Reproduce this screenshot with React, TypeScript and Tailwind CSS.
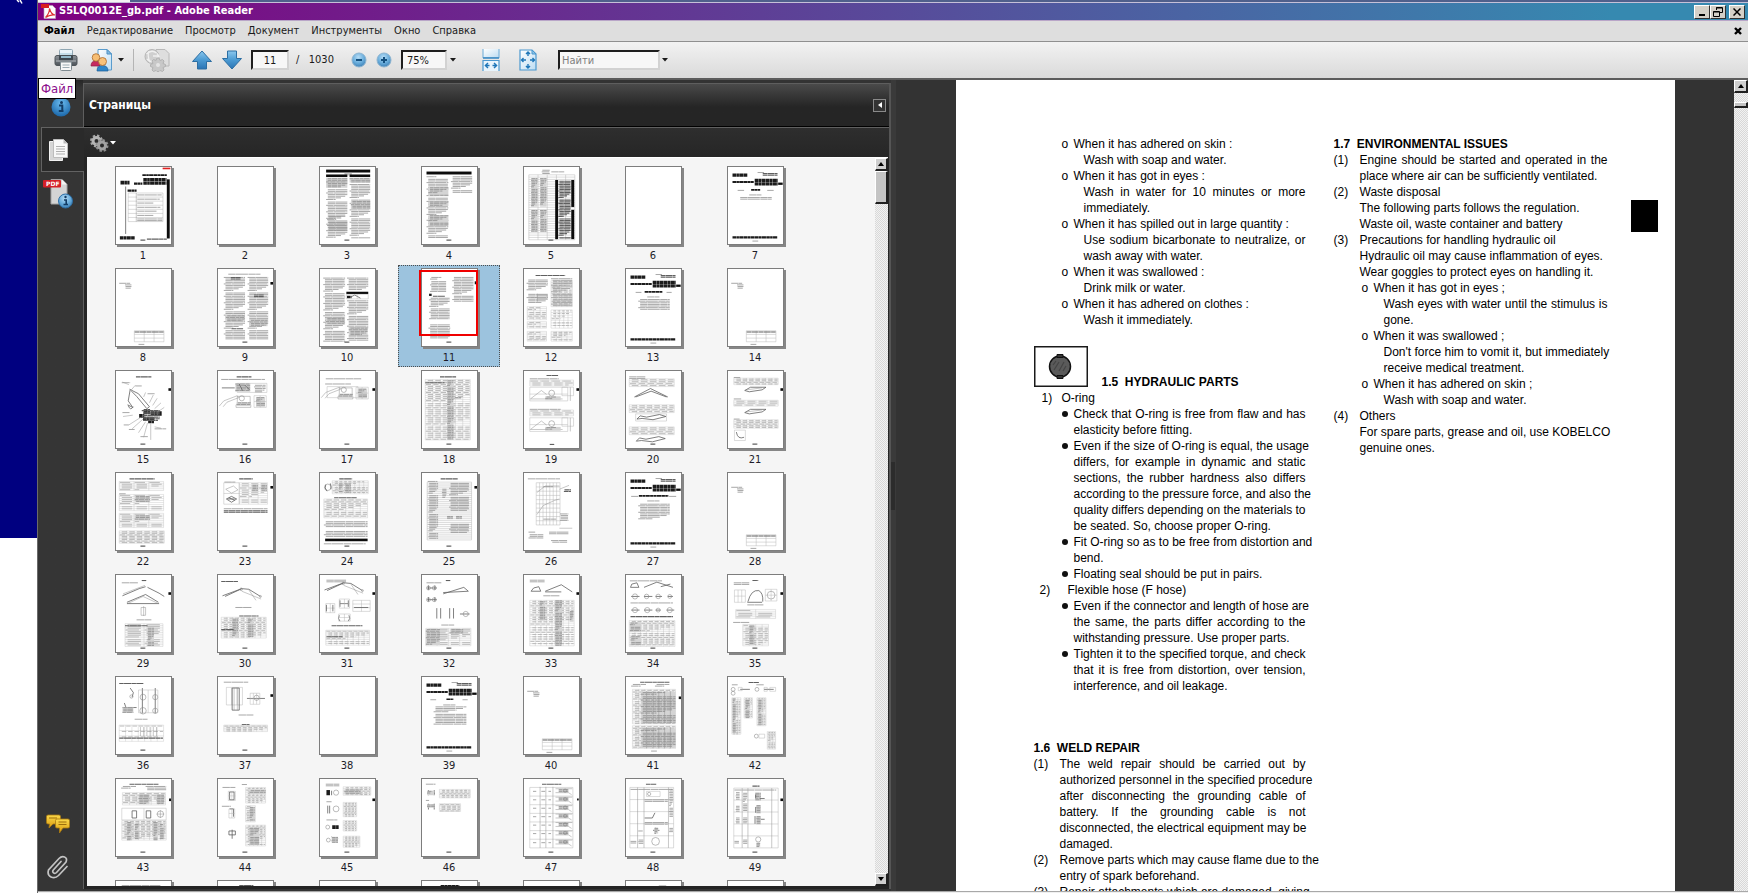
import React from "react";

type Prim = [string, ...(number | string)[]];

/* ---------- page miniatures (171 x 237 drawing units) ---------- */

function textPath(x: number, y: number, w: number, h: number, step: number) {
  let d = "";
  let i = 0;
  for (let yy = y + 2; yy < y + h; yy += step) {
    const k = (i * 7 + Math.round(x) * 3 + Math.round(w)) % 11;
    const len = h > step * 2 ? (k === 0 ? 0.45 : k === 4 ? 0.7 : k === 8 ? 0.9 : 1) : 1;
    const ind = h > step * 2 && k % 5 !== 0 ? Math.min(6, w * 0.08) : 0;
    d += `M${x + ind} ${yy}H${x + w * len}`;
    i++;
    if (k === 0) yy += step * 0.6;
  }
  return d;
}

function gridPath(x: number, y: number, w: number, h: number, c: number, r: number) {
  let d = `M${x} ${y}h${w}v${h}h${-w}z`;
  for (let i = 1; i < c; i++) d += `M${x + (w * i) / c} ${y}v${h}`;
  for (let j = 1; j < r; j++) d += `M${x} ${y + (h * j) / r}h${w}`;
  return d;
}

function Shape({ p }: { p: Prim }) {
  const kind = p[0];
  const [x, y, w, h, a, b] = p.slice(1) as number[];
  switch (kind) {
    case "t":
      return <path d={textPath(x, y, w, h, 5)} stroke="#979797" strokeWidth="2.600" strokeDasharray="23 1 37 1.500" />;
    case "d":
      return <path d={textPath(x, y, w, h, 5)} stroke="#606060" strokeWidth="3.400" strokeDasharray="14 1 22 1" />;
    case "k":
      return <path d={`M${x} ${y + h / 2}h${w}`} stroke="#1c1c1c" strokeWidth={h} strokeDasharray="11 1 8 1 13 1" />;
    case "b":
      return <rect x={x} y={y} width={w} height={h} fill="#0c0c0c" />;
    case "m":
      return (
        <>
          <rect x={x} y={y} width={w} height={h} fill="#d4d4d4" />
          <path d={textPath(x, y, w, h, 5)} stroke="#8a8a8a" strokeWidth="2.400" strokeDasharray="11 1.500 17 2" />
        </>
      );
    case "g":
      return <path d={gridPath(x, y, w, h, a, b)} stroke="#b0b0b0" strokeWidth="1.400" />;
    case "G":
      return (
        <>
          <path d={textPath(x + 2, y + 1, w - 4, h - 2, h / b)} stroke="#a2a2a2" strokeWidth="2.200" strokeDasharray={`${(w / a) * 0.7} ${(w / a) * 0.3}`} />
          <path d={gridPath(x, y, w, h, a, b)} stroke="#b8b8b8" strokeWidth="1.100" />
        </>
      );
    case "c":
      return <circle cx={x} cy={y} r={w} stroke="#8a8a8a" strokeWidth="1.800" />;
    case "p":
      return <path d={p[1] as string} stroke="#8c8c8c" strokeWidth="1.500" />;
    case "P":
      return <path d={p[1] as string} stroke="#5c5c5c" strokeWidth="2.400" />;
    case "r":
      return <rect x={x} y={y} width={w} height={h} fill="#e02020" />;
    default:
      return null;
  }
}

const foot: Prim = ["d", 76, 223, 16, 4];
const nub: Prim = ["b", 163, 53, 8, 8];
const nubHigh: Prim = ["b", 163, 40, 8, 8];

const cover = (title: Prim[], toc: Prim[]): Prim[] => [
  ["k", 14, 20, 46, 10], ["t", 92, 15, 20, 4], ["d", 108, 18, 46, 8], ["k", 14, 43, 66, 6],
  ["k", 83, 36, 72, 10], ["k", 83, 47, 72, 10], ["b", 156, 48, 14, 7],
  ...title, ["t", 66, 84, 38, 4], ...toc, ["k", 14, 213, 140, 7], ["t", 76, 226, 18, 4],
];
const divider: Prim[] = [["t", 10, 42, 34, 4], ["t", 28, 47, 20, 16], ["g", 57, 190, 92, 34, 3, 3], ["d", 58, 192, 90, 10], ["t", 70, 230, 18, 4]];
const machine = (y: number): Prim[] => [
  ["p", `M4 ${y + 36}L18 ${y + 20}L60 ${y + 4}L64 ${y + 10}L28 ${y + 24}L16 ${y + 38}M60 ${y + 6}h40v24h-40zM56 ${y + 32}h46v8h-46z`],
  ["c", 74, y + 12, 8], ["m", 58, y + 24, 44, 12], ["m", 118, y + 8, 28, 30], ["g", 112, y + 4, 38, 36, 2, 2],
];
const machineBox = (y: number): Prim[] => [
  ["g", 18, y, 118, 42, 1, 2], ["p", `M20 ${y + 36}L54 ${y + 10}L70 ${y + 22}M20 ${y + 36}h100`],
  ["c", 86, y + 18, 9], ["m", 66, y + 28, 48, 12], ["g", 118, y, 36, 26, 1, 1], ["p", `M144 ${y}v42`],
];
const boom = (y: number): Prim[] => [
  ["P", `M14 ${y + 26}L74 ${y + 4}L96 ${y + 6}L132 ${y + 28}M74 ${y + 4}L22 ${y + 28}`], ["p", `M96 ${y + 8}L118 ${y + 40}M74 ${y + 12}L134 ${y + 36}`],
  ["c", 72, y + 6, 4], ["c", 132, y + 28, 3],
];

const pages: Record<number, Prim[]> = {
  1: [["r", 145, 2, 24, 5], ["k", 82, 22, 76, 6], ["k", 85, 34, 72, 10], ["k", 85, 45, 72, 10], ["k", 14, 42, 28, 12], ["k", 56, 48, 26, 7], ["b", 158, 38, 9, 182], ["P", "M30 60V206"], ["k", 36, 69, 28, 7], ["g", 38, 80, 108, 88, 1, 7], ["p", "M63 80V168"], ["t", 66, 84, 76, 4], ["t", 66, 97, 70, 4], ["t", 66, 109, 50, 4], ["t", 66, 122, 72, 4], ["t", 66, 134, 60, 4], ["t", 66, 147, 50, 4], ["t", 66, 158, 78, 9], ["k", 12, 213, 46, 10], ["d", 96, 220, 62, 4], foot],
  3: [["b", 19, 8, 137, 9], ["t", 76, 17, 24, 8], ["b", 19, 23, 66, 8], ["b", 92, 23, 64, 8], ["m", 19, 34, 66, 30], ["t", 19, 68, 66, 154], ["m", 92, 34, 64, 14], ["t", 92, 52, 64, 168], ["t", 22, 150, 63, 50], ["m", 96, 104, 60, 26], foot],
  4: [["b", 14, 14, 140, 9], ["t", 14, 28, 68, 190], ["m", 20, 62, 62, 28], ["m", 20, 106, 62, 14], ["m", 20, 148, 62, 32], ["t", 90, 28, 66, 54], foot],
  5: [["t", 55, 8, 25, 14], ["t", 85, 13, 40, 4], ["g", 15, 24, 143, 200, 5, 28], ["m", 22, 34, 20, 88], ["m", 50, 34, 20, 88], ["m", 22, 132, 20, 68], ["m", 50, 132, 20, 68], ["b", 97, 40, 9, 182], ["b", 147, 40, 9, 83], ["b", 147, 132, 9, 90], ["d", 107, 42, 38, 178], foot],
  7: cover([["t", 30, 70, 20, 3], ["k", 72, 68, 28, 5], ["t", 122, 70, 20, 3]], [["t", 38, 92, 98, 9]]),
  8: divider,
  9: [["t", 32, 14, 100, 4], ["t", 18, 24, 66, 194], ["t", 92, 24, 64, 194], ["d", 40, 24, 30, 8], ["d", 112, 78, 30, 8], ["d", 42, 182, 36, 6], ["m", 24, 142, 58, 20], ["m", 98, 156, 56, 20], nubHigh, foot],
  10: [["t", 10, 26, 68, 198], ["m", 18, 150, 58, 22], ["t", 84, 26, 66, 40], ["b", 82, 70, 68, 7], ["k", 84, 82, 14, 8], ["P", "M96 86L108 80L126 90"], ["g", 82, 78, 68, 14, 2, 1], ["t", 84, 96, 66, 126], ["m", 90, 180, 58, 24], foot],
  11: [["t", 25, 24, 50, 46], ["k", 22, 76, 8, 7], ["d", 34, 82, 38, 3], ["t", 22, 88, 64, 68], ["t", 20, 170, 68, 46], ["t", 94, 24, 66, 78], ["b", 164, 38, 8, 9], foot],
  12: [["d", 36, 18, 92, 6], ["t", 8, 32, 66, 40], ["p", "M22 88h20M42 76v24M42 80h30v10h-30"], ["t", 8, 76, 66, 30], ["t", 84, 28, 66, 88], ["G", 84, 36, 66, 80, 4, 14], ["G", 10, 116, 60, 40, 3, 7], ["G", 84, 126, 66, 56, 5, 7], ["G", 10, 162, 60, 20, 3, 4], ["G", 10, 192, 60, 30, 3, 6], ["G", 84, 192, 66, 30, 4, 6]],
  13: cover([["t", 30, 70, 18, 3], ["k", 58, 68, 56, 5], ["t", 126, 70, 16, 3]], [["t", 38, 92, 98, 36]]),
  14: divider,
  15: [["d", 62, 16, 48, 3], ["P", "M44 58L38 92L52 112L36 104M42 56L70 70L104 110L96 116L64 78L48 62"], ["P", "M38 106q6 18 16 4"], ["k", 72, 132, 16, 12], ["k", 86, 118, 20, 14], ["k", 108, 124, 34, 14], ["k", 84, 142, 36, 10], ["k", 100, 154, 18, 7], ["d", 80, 120, 56, 34], ["p", "M20 34l20 8M60 44l-14 16M92 66l-6 14M116 74l-12 24M128 84l-14 22M140 98l-20 18M150 112l-20 14M40 166l38-24M50 178l34-30M70 190l22-34M86 204l12-44M108 212v-50M120 172l20 4M22 140l30-4"], ["t", 18, 34, 26, 3], ["t", 60, 44, 20, 3], ["t", 98, 68, 22, 3], ["t", 20, 126, 22, 3], ["t", 24, 164, 16, 3], ["t", 40, 178, 18, 3], ["t", 76, 200, 24, 3], ["t", 120, 176, 36, 3], nub, foot],
  16: [["d", 58, 16, 46, 3], ["t", 10, 24, 136, 6], ["g", 60, 38, 92, 28, 1, 1], ["m", 54, 38, 46, 26], ["t", 112, 42, 36, 24], ["P", "M12 52h40M66 40l10 20M84 44l14 14"], ...machine(72), foot],
  17: [["t", 18, 22, 110, 6], ["t", 16, 38, 80, 4], ["g", 22, 48, 96, 34, 1, 1], ...machine(46), nub, foot],
  18: [["d", 56, 16, 50, 3], ["G", 10, 26, 140, 186, 6, 30], ["m", 78, 28, 20, 184], ["m", 102, 80, 20, 6], ["d", 10, 34, 60, 3], foot],
  19: [["d", 70, 12, 36, 3], ["t", 18, 22, 90, 4], ["G", 18, 28, 136, 18, 4, 3], ...machineBox(50), ["t", 18, 116, 96, 4], ["G", 18, 120, 136, 18, 4, 3], ...machineBox(144), nub, ["d", 80, 224, 14, 4]],
  20: [["t", 10, 16, 50, 8], ["G", 10, 24, 140, 24, 5, 4], ["P", "M26 80L76 54L130 80M30 80L78 62L126 80"], ["G", 10, 104, 140, 24, 6, 4], ["g", 30, 132, 96, 22, 1, 1], ["P", "M34 148l10-10l20 4l40-8l20 6l-40 10l-34-4z"], ["G", 10, 172, 140, 24, 5, 4], ["P", "M32 216l10-10l20 4l40-8l20 6l-40 10l-34-4z"], foot],
  21: [["t", 18, 18, 20, 4], ["G", 18, 22, 138, 20, 7, 4], ["P", "M52 60l18-10l48 0l-12 8l-40 6z"], ["p", "M56 58l50-6"], ["t", 18, 84, 24, 4], ["G", 18, 90, 138, 18, 4, 3], ["P", "M52 128l18-10l48 0l-12 8l-40 6z"], ["p", "M56 126l50-6"], ["t", 18, 146, 18, 4], ["G", 18, 150, 138, 26, 7, 5], ["g", 20, 182, 34, 32, 1, 1], ["P", "M26 188q4 24 24 16"], nub, foot],
  22: [["d", 42, 16, 78, 4], ["G", 10, 26, 138, 28, 3, 5], ["t", 10, 62, 20, 3], ["G", 10, 66, 138, 50, 3, 8], ["m", 58, 70, 48, 18], ["G", 10, 124, 138, 44, 3, 8], ["m", 58, 130, 48, 14], ["G", 10, 178, 140, 38, 6, 8], foot],
  23: [["d", 66, 16, 42, 3], ["t", 20, 26, 34, 4], ["G", 66, 30, 88, 66, 3, 10], ["g", 18, 30, 48, 66, 1, 2], ["m", 106, 36, 18, 22], ["m", 134, 36, 18, 22], ["p", "M24 50l24-10l14 12l-20 10z"], ["P", "M26 80l16-8l16 8l-16 10zM30 80h22M34 76l18 8"], ["t", 18, 108, 136, 4], ["d", 18, 114, 136, 8], nubHigh, foot],
  24: [["d", 60, 16, 40, 3], ["c", 24, 44, 10], ["P", "M18 36q-6 10 4 20M32 32q4 10 2 18"], ["G", 38, 24, 112, 40, 8, 8], ["m", 58, 32, 14, 30], ["m", 78, 32, 18, 30], ["d", 44, 74, 70, 4], ["G", 12, 80, 136, 58, 6, 10], ["t", 12, 148, 136, 22], ["t", 12, 178, 136, 18], ["b", 16, 202, 132, 8], ["t", 12, 216, 130, 4], foot],
  25: [["d", 58, 16, 54, 3], ["t", 18, 24, 30, 3], ["g", 16, 28, 138, 178, 1, 30], ["t", 20, 30, 30, 174], ["t", 84, 30, 62, 90], ["m", 78, 132, 18, 10], ["m", 106, 132, 18, 10], ["t", 84, 156, 62, 30], ["t", 62, 48, 14, 30], nubHigh, foot],
  26: [["t", 12, 16, 100, 6], ["g", 38, 30, 74, 130, 7, 10], ["p", "M40 128L60 100L96 84L110 80M40 60L66 40H110M110 50l30-12M110 170h40"], ["d", 124, 50, 22, 12], ["t", 60, 40, 30, 3], ["t", 60, 140, 40, 3], ["t", 112, 124, 26, 24], ["t", 14, 180, 46, 24], ["t", 78, 180, 60, 8], ["t", 84, 206, 50, 12]],
  27: cover([["k", 40, 68, 92, 5], ["t", 16, 70, 22, 3], ["t", 134, 70, 22, 3]], [["t", 38, 94, 98, 48]]),
  28: divider,
  29: [["d", 80, 15, 14, 3], ["t", 18, 22, 50, 3], ["P", "M20 64L72 42L92 36M98 38l36 18l16 10M34 84L92 60l40 24M34 88h100"], ["p", "M22 58L90 32M36 88L84 66L132 88M86 96v30M78 100h14v24h-14z"], ["t", 64, 136, 46, 3], ["G", 28, 150, 118, 70, 2, 13], ["d", 28, 154, 70, 4], ["m", 98, 162, 20, 56], nub, foot],
  30: [["d", 10, 18, 52, 3], ...boom(38), ["t", 54, 98, 50, 4], ["d", 66, 124, 60, 4], ["G", 10, 130, 140, 64, 8, 10], ["m", 44, 134, 18, 58], ["m", 92, 134, 18, 58], ["d", 10, 166, 40, 4], foot],
  31: [["t", 20, 14, 62, 8], ...boom(20), ["g", 18, 88, 28, 28, 2, 2], ["P", "M20 92v20M40 92v20M62 78v20M88 78v20M62 88h26M60 124q-6 10 2 18M90 124q6 10-2 18"], ["g", 60, 74, 32, 28, 2, 2], ["g", 102, 78, 54, 34, 2, 3], ["P", "M106 100h44"], ["g", 58, 120, 36, 22, 2, 2], ["d", 36, 154, 96, 3], ["G", 18, 170, 136, 46, 8, 8], ["d", 20, 188, 50, 4], nub, foot],
  32: [["d", 74, 15, 14, 3], ["t", 14, 22, 46, 3], ["P", "M16 40h30M20 32v14M40 32v14M16 76h30M20 68v14M40 68v14M66 58L130 38L144 50L66 54"], ["c", 20, 40, 6], ["c", 38, 40, 6], ["c", 20, 76, 6], ["c", 38, 76, 6], ["P", "M46 102v32M58 102v32M86 102v32M98 102v32M118 120h30"], ["c", 136, 120, 8], ["t", 60, 152, 40, 3], ["G", 12, 164, 140, 54, 4, 10], ["m", 12, 166, 44, 50], ["m", 88, 166, 40, 14], foot],
  33: [["t", 18, 14, 46, 8], ["P", "M22 50h30l-6-14l-16 4zM66 50l50-20l34 22M66 52h50"], ["t", 60, 62, 50, 4], ["G", 18, 78, 138, 140, 8, 20], ["m", 96, 78, 22, 140], ["m", 96, 78, 22, 140], ["m", 48, 80, 18, 60], ["m", 142, 110, 12, 34], nub, foot],
  34: [["t", 12, 16, 100, 3], ["P", "M14 38h26l-6-14l-16 4zM56 38l40-16l50 16M108 36l30-8"], ["P", "M16 66h26M56 66h26M92 66h20M130 66h16M16 108h26M56 108h26M92 108h16M126 108h24"], ["c", 28, 66, 8], ["c", 64, 66, 7], ["c", 100, 66, 7], ["c", 136, 66, 6], ["c", 28, 108, 8], ["c", 66, 108, 8], ["c", 100, 108, 6], ["c", 136, 108, 8], ["t", 14, 84, 132, 3], ["d", 14, 126, 132, 3], ["G", 10, 140, 142, 80, 8, 14], ["m", 12, 146, 34, 30], ["m", 14, 188, 32, 28], foot],
  35: [["d", 76, 15, 18, 3], ["t", 18, 22, 48, 8], ["g", 20, 46, 34, 38, 3, 2], ["P", "M62 82q10-38 34-34q14 8 12 34M60 84h46"], ["g", 116, 44, 36, 36, 2, 2], ["c", 134, 62, 12], ["t", 60, 90, 50, 3], ["G", 24, 106, 124, 28, 2, 5], ["t", 16, 144, 50, 3], ["G", 46, 152, 80, 66, 4, 12], ["m", 66, 156, 16, 60], nub, foot],
  36: [["d", 10, 18, 76, 3], ["P", "M44 34l10 14l-4 14M82 34v78M122 34v78M20 94h44M26 80l10 28"], ["c", 48, 60, 5], ["c", 84, 62, 9], ["c", 122, 62, 8], ["c", 84, 104, 10], ["c", 122, 104, 8], ["m", 20, 92, 34, 18], ["g", 70, 40, 60, 70, 2, 1], ["t", 58, 128, 40, 3], ["G", 10, 148, 138, 50, 7, 3], ["p", "M76 154v28M86 154v28M96 154v28M106 154v28M116 154v28M126 154v28"], ["d", 10, 186, 136, 4], foot],
  37: [["t", 18, 14, 76, 4], ["g", 26, 32, 50, 54, 3, 1], ["P", "M44 34h22v68h-22zM90 66h56"], ["p", "M50 34v68M60 34v68"], ["g", 100, 50, 30, 34, 3, 2], ["c", 120, 64, 8], ["t", 64, 115, 46, 3], ["d", 74, 144, 24, 3], ["G", 18, 148, 136, 20, 8, 4], nub, foot],
  39: cover([["t", 26, 68, 18, 3], ["k", 76, 66, 22, 5], ["t", 126, 68, 16, 3]], [["t", 36, 90, 102, 56]]),
  40: divider,
  41: [["d", 44, 14, 92, 3], ["t", 16, 21, 66, 12], ["t", 90, 21, 64, 12], ["G", 20, 38, 134, 106, 7, 20], ["m", 46, 46, 108, 96], ["p", "M64 44v100M84 44v100M102 44v100M120 44v100M138 44v100"], ["G", 20, 150, 134, 70, 7, 14], ["m", 46, 158, 108, 60], ["p", "M64 154v66M84 154v66M102 154v66M120 154v66M138 154v66"], ["b", 164, 60, 7, 8], ["t", 78, 226, 18, 4]],
  42: [["d", 64, 15, 32, 3], ["t", 12, 22, 18, 3], ["t", 88, 22, 24, 3], ["P", "M38 38h30M112 38h30"], ["c", 16, 38, 6], ["c", 16, 50, 6], ["c", 90, 38, 6], ["g", 32, 32, 12, 10, 1, 1], ["g", 112, 32, 10, 12, 1, 1], ["g", 130, 32, 18, 12, 1, 1], ["G", 12, 64, 28, 112, 3, 22], ["m", 14, 66, 10, 108], ["G", 50, 64, 26, 62, 3, 12], ["m", 54, 70, 12, 56], ["G", 90, 64, 28, 86, 3, 18], ["m", 94, 70, 10, 80], ["c", 88, 182, 6], ["g", 96, 176, 18, 12, 1, 1], ["G", 122, 168, 26, 54, 3, 11]],
  43: [["d", 42, 14, 90, 3], ["t", 16, 21, 66, 14], ["t", 92, 21, 64, 14], ["G", 20, 42, 134, 38, 6, 7], ["m", 70, 48, 34, 30], ["m", 126, 48, 24, 30], ["g", 18, 90, 138, 36, 2, 1], ["P", "M50 98h14v22h-14zM94 98h14v22h-14z"], ["c", 138, 108, 10], ["p", "M126 108h24M138 96v24"], ["G", 18, 128, 138, 60, 8, 12], ["m", 34, 132, 14, 56], ["m", 58, 138, 14, 48], ["m", 116, 132, 14, 56], ["m", 136, 138, 14, 48], ["b", 165, 60, 6, 8], foot],
  44: [["t", 74, 15, 16, 3], ["t", 14, 24, 40, 6], ["P", "M36 40h14v24h-14zM36 92h12v24M44 156v28M34 160h20v12h-20z"], ["g", 32, 38, 22, 28, 2, 2], ["g", 34, 92, 18, 28, 2, 2], ["t", 12, 82, 28, 3], ["G", 86, 26, 62, 48, 5, 9], ["m", 98, 34, 50, 12], ["G", 86, 82, 30, 50, 2, 10], ["m", 98, 86, 16, 44], ["G", 86, 142, 62, 64, 5, 12], ["m", 98, 150, 30, 54], foot],
  45: [["t", 18, 14, 42, 8], ["k", 20, 34, 12, 16], ["P", "M36 36v14M24 82v24M30 82v24M36 178l14 10l6-6"], ["k", 38, 142, 20, 12], ["m", 36, 178, 20, 18], ["c", 50, 42, 8], ["c", 50, 92, 9], ["c", 24, 148, 6], ["c", 26, 188, 6], ["t", 20, 68, 16, 3], ["t", 20, 124, 34, 3], ["G", 72, 24, 86, 26, 6, 5], ["m", 76, 32, 50, 16], ["G", 72, 72, 42, 44, 4, 9], ["G", 72, 128, 42, 32, 4, 6], ["G", 72, 176, 52, 34, 5, 7], ["b", 163, 60, 8, 8], foot],
  46: [["t", 12, 14, 30, 8], ["P", "M20 34v16M38 34v16M16 44h24M20 76v18M38 76v18M16 84h24"], ["m", 16, 36, 22, 14], ["m", 16, 78, 24, 10], ["t", 12, 64, 10, 3], ["G", 54, 32, 96, 26, 7, 5], ["G", 54, 76, 66, 24, 4, 5], foot],
  47: [["d", 56, 14, 60, 3], ["g", 18, 26, 134, 186, 1, 7], ["p", "M50 24v188M68 24v188M90 24v188"], ...[28, 54, 80, 106, 132, 158, 186].flatMap((y): Prim[] => [["t", 28, y + 8, 10, 4], ["t", 54, y + 8, 12, 4], ["t", 76, y + 8, 8, 4], ["m", 108, y + 3, 30, 10], ["p", `M98 ${y + 2}h52M98 ${y + 14}h40l10 6`], ["c", 128, y + 8, 5]]), ["b", 165, 60, 5, 6], foot],
  48: [["d", 62, 14, 32, 3], ["g", 12, 26, 136, 186, 1, 5], ["p", "M36 26v186M56 26v186M132 26v186"], ["t", 14, 30, 130, 3], ["g", 64, 38, 42, 16, 1, 1], ["c", 72, 46, 5], ["t", 58, 62, 72, 8], ["P", "M58 120h24l8-16M84 158h20M92 150v18"], ["t", 58, 132, 72, 8], ["m", 88, 150, 12, 18], ["c", 92, 192, 12], ["t", 38, 158, 14, 3], ["t", 14, 190, 18, 10], ["t", 38, 186, 16, 14], ["t", 134, 30, 12, 90], ["t", 134, 150, 12, 14], foot],
  49: [["d", 76, 20, 22, 3], ["g", 18, 28, 138, 184, 1, 5], ["p", "M44 28v184M62 28v184M136 28v184"], ["t", 20, 32, 130, 3], ["m", 84, 42, 18, 24], ["m", 88, 80, 14, 26], ["P", "M86 48v10M100 60h14M86 86v18M84 114v24M100 124h14"], ["m", 88, 114, 14, 26], ["c", 94, 186, 8], ["m", 88, 196, 12, 14], ["t", 24, 40, 12, 24], ["t", 24, 82, 12, 18], ["t", 24, 118, 12, 18], ["t", 46, 42, 14, 60], ["t", 46, 118, 14, 18], ["t", 20, 190, 14, 8], ["t", 46, 186, 14, 14], ["b", 163, 60, 8, 8], foot],
  50: [["t", 18, 12, 120, 4]],
  51: [["d", 66, 12, 44, 3]],
  53: [["k", 58, 12, 58, 5]],
  55: [["t", 102, 13, 24, 3]],
};

function Thumb({ n, labelled }: { n: number; labelled: boolean }) {
  const current = n === 11;
  return (
    <button
      type="button"
      aria-label={`Страница ${n}`}
      className={
        current
          ? "relative flex h-[102px] flex-col items-center border border-dotted border-[#4d4d4d] bg-[#9cc3de] pt-[2px]"
          : "relative flex h-[102px] flex-col items-center border border-transparent pt-[2px]"
      }
    >
      <span className="block border border-[#7d7d7d] bg-white shadow-[2px_2px_0_#868686]">
        <svg viewBox="0 0 171 237" className="block h-[77px] w-[55px]" preserveAspectRatio="none" fill="none">
          {(pages[n] ?? []).map((p, i) => (
            <Shape key={i} p={p} />
          ))}
        </svg>
      </span>
      {current && <span className="absolute top-1 left-5 h-[66px] w-[59px] border-2 border-[#f00000]" />}
      {labelled && <span className="mt-[3px] text-[11px] leading-[15px] text-[#1c1c28]">{n}</span>}
    </button>
  );
}

/* ---------- small chrome parts ---------- */

const Grip = ({ className }: { className: string }) => (
  <span className={`h-[22px] w-[4px] shrink-0 bg-[radial-gradient(circle,#9a9a9a_35%,transparent_45%)] bg-[length:2px_2px] ${className}`} />
);

const Caret = ({ label, className }: { label: string; className: string }) => (
  <button type="button" aria-label={label} className={`shrink-0 ${className}`}>
    <svg width="6" height="4" viewBox="0 0 6 4"><path d="M0 0h6L3 3.6z" fill="currentColor" /></svg>
  </button>
);

function WinButton({ label, className = "", children }: { label: string; className?: string; children: React.ReactNode }) {
  return (
    <button type="button" aria-label={label} className={`flex h-[14px] w-4 items-center justify-center border border-t-white border-l-white border-r-[#303030] border-b-[#303030] bg-[#d4d0c8] ${className}`}>
      {children}
    </button>
  );
}

function ScrollBtn({ label, down }: { label: string; down?: boolean }) {
  return (
    <button type="button" aria-label={label} className="flex h-[13px] w-full shrink-0 items-center justify-center border border-t-white border-l-white border-r-2 border-b-2 border-r-[#202020] border-b-[#202020] bg-[#cfcfcf]">
      <svg width="6" height="4" viewBox="0 0 6 4"><path d={down ? "M0 0h6L3 4z" : "M0 4h6L3 0z"} fill="#000" /></svg>
    </button>
  );
}

const track = "flex shrink-0 flex-col bg-[#f2f2f2] bg-[conic-gradient(#d8d8d8_25%,#f2f2f2_0_50%,#d8d8d8_0_75%,#f2f2f2_0)] bg-[length:2px_2px]";

function Defs() {
  return (
    <svg width="0" height="0" className="absolute" aria-hidden="true">
      <defs>
        <linearGradient id="blue" x1="0" y1="0" x2="0" y2="1"><stop offset="0" stopColor="#8cc8ee" /><stop offset="0.5" stopColor="#4b9ad2" /><stop offset="1" stopColor="#2b74b4" /></linearGradient>
        <radialGradient id="ball" cx="0.45" cy="0.3" r="0.7"><stop offset="0" stopColor="#b5dcf5" /><stop offset="0.6" stopColor="#68acdb" /><stop offset="1" stopColor="#3f82b8" /></radialGradient>
        <radialGradient id="info" cx="0.5" cy="0.3" r="0.75"><stop offset="0" stopColor="#6bbcf0" /><stop offset="1" stopColor="#1561a5" /></radialGradient>
        <linearGradient id="paper" x1="0" y1="0" x2="1" y2="1"><stop offset="0" stopColor="#ffffff" /><stop offset="1" stopColor="#bcdcf2" /></linearGradient>
        <linearGradient id="gold" x1="0" y1="0" x2="0" y2="1"><stop offset="0" stopColor="#fbd94a" /><stop offset="1" stopColor="#d99a10" /></linearGradient>
        <linearGradient id="steel" x1="0" y1="0" x2="0" y2="1"><stop offset="0" stopColor="#8c9298" /><stop offset="1" stopColor="#4c5258" /></linearGradient>
      </defs>
    </svg>
  );
}

const PrinterIcon = () => (
  <svg width="24" height="24" viewBox="0 0 24 24">
    <path d="M5.500 9V2.500q0-1 1-1h11q1 0 1 1V9z" fill="#e9f3f8" stroke="#8fa6b2" />
    <path d="M6 5h12v3H6z" fill="#c4dde8" />
    <rect x="1" y="7.500" width="22" height="10" rx="2" fill="url(#steel)" stroke="#50565a" />
    <path d="M5 7.500h14v4q0 1-1 1H6q-1 0-1-1z" fill="#3e474d" />
    <path d="M7 8h10v2H7z" fill="#93b9c9" />
    <path d="M2 13h20" stroke="#b4b9bd" />
    <path d="M6.500 14h11v7.500q0 1-1 1h-9q-1 0-1-1z" fill="#f7f7f7" stroke="#7e8a90" />
    <path d="M8.500 17h7M8.500 19.500h7" stroke="#9cabb2" />
  </svg>
);

const ShareIcon = () => (
  <svg width="24" height="24" viewBox="0 0 24 24">
    <path d="M8 1.500h9l4.500 4.500v16H8z" fill="url(#paper)" stroke="#5a9ccd" />
    <path d="M17 1.500V6h4.500z" fill="#86bde2" stroke="#4a8fc4" />
    <path d="M1 18q0-5 4.500-5t4.500 5z" fill="#c62a60" stroke="#8e1c45" strokeWidth="0.700" />
    <circle cx="6" cy="9.500" r="3.800" fill="#f7bd72" stroke="#a8682c" strokeWidth="0.800" />
    <path d="M7 23q0-5.500 5.500-5.500T18 23z" fill="#2f86c9" stroke="#1b5d95" strokeWidth="0.700" />
    <circle cx="12.500" cy="13.500" r="4" fill="#f9c27a" stroke="#a8682c" strokeWidth="0.800" />
  </svg>
);

const GhostIcon = () => (
  <svg width="28" height="24" viewBox="0 0 28 24">
    <path d="M13 1.500h9l4 4V18H13z" fill="#dedede" stroke="#b8b8b8" />
    <circle cx="9" cy="8.500" r="7" fill="#cfcfcf" stroke="#b6b6b6" />
    <path d="M3.500 6q5-5 10-1M4 11q3 4 9 2M6 3q-2 5 1 11M10 8h6l-2-2.500M16 8l-2 2.500" stroke="#f0f0f0" strokeWidth="1.300" fill="none" />
    <path d="M13 12.500l1-2.500h2l1 2.500 2.500-1 1.500 1.500-1 2.500 2.500 1v2l-2.500 1 1 2.500-1.500 1.500-2.500-1-1 1h-2l-1-1-2.500 1-1.500-1.500 1-2.500-2.500-1v-2l2.500-1-1-2.500 1.500-1.500z" fill="#c8c8c8" stroke="#b2b2b2" />
    <circle cx="15" cy="17" r="2" fill="#e4e4e4" />
  </svg>
);

const ArrowIcon = ({ down }: { down?: boolean }) => (
  <svg width="22" height="22" viewBox="0 0 22 22">
    <path d={down ? "M6.500 2h9v7.500h5L11 20 1.500 9.500h5z" : "M11 2l9.500 10.500h-5V20h-9v-7.500h-5z"} fill="url(#blue)" stroke="#2c6ea3" strokeLinejoin="round" />
  </svg>
);

const ZoomBall = ({ plus }: { plus?: boolean }) => (
  <svg width="16" height="16" viewBox="0 0 16 16">
    <circle cx="8" cy="8" r="7" fill="url(#ball)" stroke="#8db4d0" />
    <path d={plus ? "M8 5v6M5 8h6" : "M5 8h6"} stroke="#14507f" strokeWidth="2" />
  </svg>
);

const FitWidthIcon = () => (
  <svg width="18" height="22" viewBox="0 0 18 22">
    <path d="M1 0v8.500h16V0" fill="url(#paper)" stroke="#7fb6dd" strokeWidth="1.200" />
    <path d="M1 9h16" stroke="#3f8dc6" strokeWidth="1.600" />
    <path d="M1 22V11.500h16V22" fill="#e8f4fc" stroke="#4b98cf" strokeWidth="1.200" />
    <path d="M3.500 16.500h4M10.500 16.500h4M6 14l-2.600 2.500L6 19M12 14l2.600 2.500L12 19" stroke="#1e76b8" strokeWidth="1.400" fill="none" />
  </svg>
);

const FitPageIcon = () => (
  <svg width="18" height="22" viewBox="0 0 18 22">
    <path d="M1 1h12l4 4v16H1z" fill="url(#paper)" stroke="#4b98cf" strokeWidth="1.200" />
    <path d="M13 1v4h4z" fill="#8ec4e8" stroke="#4b98cf" />
    <path d="M9 3v4M7 5l2-2 2 2M9 19v-4M7 17l2 2 2-2M2.500 11H7M4.500 9l-2 2 2 2M15.500 11H11M13.500 9l2 2-2 2" stroke="#1e76b8" strokeWidth="1.400" fill="none" />
  </svg>
);

/* ---------- document text ---------- */

/* Lines of one paragraph: all but the last run to the full measure. */
function Para({ lines, mark, pad = "", markW = "" }: { lines: string[]; mark?: string; pad?: string; markW?: string }) {
  return (
    <div className={`flex ${pad}`}>
      {mark !== undefined && (
        <span className={`shrink-0 ${markW}`}>
          {mark === "●" ? <span className="mt-[5px] block size-[6px] rounded-full bg-[#111]" /> : mark}
        </span>
      )}
      <p className="min-w-0 flex-1">
        {lines.map((l, i) => (
          <span key={i} className={i < lines.length - 1 ? "block whitespace-nowrap [text-align-last:justify]" : "block whitespace-nowrap"}>
            {l}
          </span>
        ))}
      </p>
    </div>
  );
}

const Circ = ({ children, pad }: { children: string; pad: string }) => <Para lines={[children]} mark="o" pad={pad} markW="w-3" />;

function DocPage() {
  return (
    <article className="grid w-[719px] shrink-0 grid-cols-[272px_274px] items-start gap-x-7 overflow-hidden bg-white pt-[56px] pl-[78px] font-['Liberation_Sans',Arial,sans-serif] text-[12px] leading-4 text-black">
      <div>
        <Circ pad="pl-7">When it has adhered on skin :</Circ>
        <Para pad="pl-[50px]" lines={["Wash with soap and water."]} />
        <Circ pad="pl-7">When it has got in eyes :</Circ>
        <Para pad="pl-[50px]" lines={["Wash in water for 10 minutes or more", "immediately."]} />
        <Circ pad="pl-7">When it has spilled out in large quantity :</Circ>
        <Para pad="pl-[50px]" lines={["Use sodium bicarbonate to neutralize, or", "wash away with water."]} />
        <Circ pad="pl-7">When it was swallowed :</Circ>
        <Para pad="pl-[50px]" lines={["Drink milk or water."]} />
        <Circ pad="pl-7">When it has adhered on clothes :</Circ>
        <Para pad="pl-[50px]" lines={["Wash it immediately."]} />

        <div className="mt-[18px] flex items-end gap-[14px]">
          <svg width="54" height="41" viewBox="0 0 54 41" className="mb-[3px]">
            <rect x="0.750" y="0.750" width="52.500" height="39.500" fill="#fff" stroke="#1a1a1a" strokeWidth="1.500" />
            <circle cx="26" cy="20.500" r="10.500" fill="#5a5a5a" stroke="#111" strokeWidth="1.500" />
            <path d="M23 8.500h6v3h-6zM23 29.500h6v3h-6z" fill="#333" stroke="#111" />
            <path d="M20 24l5-8M25 25l5-9M29 25l3-5M19 19l3-4" stroke="#444" strokeWidth="1.200" />
          </svg>
          <h2 className="font-bold whitespace-pre">1.5  HYDRAULIC PARTS</h2>
        </div>
        <Para pad="pl-2" mark="1)" markW="w-5" lines={["O-ring"]} />
        <Para pad="pl-7" mark="●" markW="w-3" lines={["Check that O-ring is free from flaw and has", "elasticity before fitting."]} />
        <Para pad="pl-7" mark="●" markW="w-3" lines={["Even if the size of O-ring is equal, the usage", "differs, for example in dynamic and static", "sections, the rubber hardness also differs", "according to the pressure force, and also the", "quality differs depending on the materials to", "be seated. So, choose proper O-ring."]} />
        <Para pad="pl-7" mark="●" markW="w-3" lines={["Fit O-ring so as to be free from distortion and", "bend."]} />
        <Para pad="pl-7" mark="●" markW="w-3" lines={["Floating seal should be put in pairs."]} />
        <Para pad="pl-[6px]" mark="2)" markW="w-7" lines={["Flexible hose (F hose)"]} />
        <Para pad="pl-7" mark="●" markW="w-3" lines={["Even if the connector and length of hose are", "the same, the parts differ according to the", "withstanding pressure. Use proper parts."]} />
        <Para pad="pl-7" mark="●" markW="w-3" lines={["Tighten it to the specified torque, and check", "that it is free from distortion, over tension,", "interference, and oil leakage."]} />

        <h2 className="mt-[46px] font-bold whitespace-pre">1.6  WELD REPAIR</h2>
        <Para mark="(1)" markW="w-[26px]" lines={["The weld repair should be carried out by", "authorized personnel in the specified procedure", "after disconnecting the grounding cable of", "battery. If the grounding cable is not", "disconnected, the electrical equipment may be", "damaged."]} />
        <Para mark="(2)" markW="w-[26px]" lines={["Remove parts which may cause flame due to the", "entry of spark beforehand."]} />
        <Para mark="(3)" markW="w-[26px]" lines={["Repair attachments which are damaged, giving", ""]} />
      </div>

      <div className="relative">
        <h2 className="font-bold whitespace-pre">1.7  ENVIRONMENTAL ISSUES</h2>
        <Para mark="(1)" markW="w-[26px]" lines={["Engine should be started and operated in the", "place where air can be sufficiently ventilated."]} />
        <Para mark="(2)" markW="w-[26px]" lines={["Waste disposal"]} />
        <Para pad="pl-[26px]" lines={["The following parts follows the regulation."]} />
        <Para pad="pl-[26px]" lines={["Waste oil, waste container and battery"]} />
        <Para mark="(3)" markW="w-[26px]" lines={["Precautions for handling hydraulic oil"]} />
        <Para pad="pl-[26px]" lines={["Hydraulic oil may cause inflammation of eyes."]} />
        <Para pad="pl-[26px]" lines={["Wear goggles to protect eyes on handling it."]} />
        <Circ pad="pl-7">When it has got in eyes ;</Circ>
        <Para pad="pl-[50px]" lines={["Wash eyes with water until the stimulus is", "gone."]} />
        <Circ pad="pl-7">When it was swallowed ;</Circ>
        <Para pad="pl-[50px]" lines={["Don't force him to vomit it, but immediately", "receive medical treatment."]} />
        <Circ pad="pl-7">When it has adhered on skin ;</Circ>
        <Para pad="pl-[50px]" lines={["Wash with soap and water."]} />
        <Para mark="(4)" markW="w-[26px]" lines={["Others"]} />
        <Para pad="pl-[26px]" lines={["For spare parts, grease and oil, use KOBELCO", "genuine ones."]} />
        <span className="absolute top-16 left-[297px] h-8 w-[27px] bg-black" />
      </div>
    </article>
  );
}

/* ---------- application ---------- */

const menus = ["Файл", "Редактирование", "Просмотр", "Документ", "Инструменты", "Окно", "Справка"];
const field = "h-5 shrink-0 border-2 border-t-[#1e1e1e] border-l-[#1e1e1e] border-r-[#d2d2d2] border-b-[#d2d2d2] bg-[#f7f7f7] text-[11px] text-[#1a1a1a] outline-none";

export default function App() {
  const thumbs = Array.from({ length: 56 }, (_, i) => i + 1);
  return (
    <div className="flex h-screen overflow-hidden bg-white font-['DejaVu_Sans_Condensed','DejaVu_Sans',Tahoma,sans-serif] text-[11px] text-[#1a1a1a]">
      <Defs />
      <aside className="h-[60.2%] w-[37px] shrink-0 bg-[#000080]">
        <svg width="37" height="6" viewBox="0 0 37 6"><path d="M17 0l2 2M20 0l2 3.500" stroke="#fff" strokeWidth="1.500" fill="none" /></svg>
      </aside>

      <div className="relative flex min-w-0 flex-1 flex-col border-l border-[#6a6a6a]">
        <div className="h-[2px] bg-[linear-gradient(90deg,#f4f4f4_92px,#50608c_92px)]" />

        <header className="flex h-[19px] shrink-0 items-center border-t border-b border-t-[#c6c0d8] border-b-[#b9a6c8] bg-[linear-gradient(90deg,#800080,#3689b0_92%)] px-[3px]">
          <svg width="15" height="15" viewBox="0 0 15 15" className="shrink-0">
            <path d="M3 1.500h8.500L14.500 4.500v10H3z" fill="#fdfdfd" stroke="#b8a8b8" strokeWidth="0.600" />
            <path d="M0 0h8v4H0z" fill="#d81e1e" />
            <path d="M4.500 13.500C7 11 8.500 7.500 8.500 4.500c1 4 3 6 5.500 6.500-3-.5-6 0-9.500 2.500z" fill="none" stroke="#d33" strokeWidth="1.200" />
          </svg>
          <h1 className="ml-[3px] flex-1 font-bold text-white">S5LQ0012E_gb.pdf - Adobe Reader</h1>
          <WinButton label="Свернуть"><span className="mt-[6px] h-[2px] w-[6px] bg-black" /></WinButton>
          <WinButton label="Восстановить">
            <svg width="10" height="10" viewBox="0 0 10 10" fill="none" stroke="#000"><path d="M3.500 3V.5h6v5H7M3 1h6" /><path d="M.5 4.500h6v5h-6zM.5 5h6" /></svg>
          </WinButton>
          <WinButton label="Закрыть" className="ml-[3px]">
            <svg width="8" height="8" viewBox="0 0 8 8"><path d="M.5.5l7 7M7.500.5l-7 7" stroke="#000" strokeWidth="1.500" /></svg>
          </WinButton>
        </header>

        <nav className="flex h-[21px] shrink-0 items-center gap-3 border-b border-[#8f8f8f] bg-[#dedede] pr-[6px] pl-[6px]">
          {menus.map((m, i) => (
            <button key={m} type="button" className={i === 0 ? "font-bold text-black" : ""}>{m}</button>
          ))}
          <button type="button" aria-label="Закрыть документ" className="ml-auto">
            <svg width="8" height="8" viewBox="0 0 8 8"><path d="M1 1l6 6M7 1L1 7" stroke="#000" strokeWidth="2.400" /></svg>
          </button>
        </nav>

        <div className="flex h-[38px] shrink-0 items-center border-b-2 border-[#5c5c5c] bg-linear-to-b from-[#f2f2f2] to-[#dadada] pl-[4px]">
          <Grip className="" />
          <button type="button" aria-label="Печать" className="ml-2 shrink-0"><PrinterIcon /></button>
          <button type="button" aria-label="Совместная работа" className="ml-3 shrink-0"><ShareIcon /></button>
          <Caret label="Меню совместной работы" className="ml-1" />
          <span className="ml-[9px] h-[22px] w-px shrink-0 bg-[#b4b4b4]" />
          <button type="button" aria-label="Обзор" className="ml-[9px] shrink-0"><GhostIcon /></button>
          <Grip className="ml-2" />
          <button type="button" aria-label="Предыдущая страница" className="ml-2 shrink-0"><ArrowIcon /></button>
          <button type="button" aria-label="Следующая страница" className="ml-2 shrink-0"><ArrowIcon down /></button>
          <input aria-label="Номер страницы" defaultValue="11" className={`${field} ml-2 w-[38px] text-center`} />
          <span className="ml-[7px] whitespace-nowrap">/&nbsp;&nbsp; 1030</span>
          <Grip className="ml-[6px]" />
          <button type="button" aria-label="Уменьшить" className="ml-[7px] shrink-0"><ZoomBall /></button>
          <button type="button" aria-label="Увеличить" className="ml-[9px] shrink-0"><ZoomBall plus /></button>
          <input aria-label="Масштаб" defaultValue="75%" className={`${field} ml-[9px] w-[46px] pl-1`} />
          <Caret label="Выбрать масштаб" className="ml-[3px]" />
          <Grip className="ml-[10px]" />
          <button type="button" aria-label="По ширине" className="ml-3 shrink-0"><FitWidthIcon /></button>
          <button type="button" aria-label="Страница целиком" className="ml-[19px] shrink-0"><FitPageIcon /></button>
          <Grip className="ml-[13px]" />
          <input aria-label="Найти" placeholder="Найти" className={`${field} ml-1 w-[102px] pl-[2px] placeholder:text-[#808080]`} />
          <Caret label="Параметры поиска" className="ml-[2px]" />
        </div>

        <div className="flex min-h-0 flex-1 bg-[#333]">
          {/* side strip */}
          <div className="flex w-[45px] shrink-0 flex-col items-center bg-linear-to-b from-[#262626] to-[#353535] to-[8px]">
            <button type="button" aria-label="Сведения" className="mt-[17px] h-5">
              <svg width="20" height="20" viewBox="0 0 20 20"><circle cx="10" cy="10" r="9.500" fill="url(#info)" /><path d="M8 8.500h3.300V14M7.800 14h4.700" stroke="#123c66" strokeWidth="2" fill="none" /><circle cx="10.500" cy="5.500" r="1.500" fill="#123c66" /></svg>
            </button>
            <button type="button" aria-label="Страницы" className="z-10 -mr-1 mt-[10px] flex h-[45px] w-[43px] shrink-0 items-center border border-r-0 border-[#626262] bg-[#2a2a2a] pl-[7px]">
              <svg width="19" height="22" viewBox="0 0 19 22"><path d="M.500 2.500h13v19H.500z" fill="#d6d6d6" stroke="#f2f2f2" /><path d="M4.500.500h10l4 4v14h-14z" fill="#f8f8f8" stroke="#bdbdbd" /><path d="M14.500.500v4h4z" fill="#bbb" /><path d="M7 7.500h9M7 10h9M7 12.500h9M7 15h9" stroke="#b0b0b0" /></svg>
            </button>
            <button type="button" aria-label="Сведения о PDF" className="mt-[6px] mr-[5px]">
              <svg width="30" height="32" viewBox="0 0 30 32">
                <path d="M8 1.500h11l5 5V26H8z" fill="#d4d4d4" stroke="#a2a2a2" /><path d="M19 1.500v5h5z" fill="#f4f4f4" />
                <rect x="0" y="2" width="18" height="7.500" rx="1" fill="#d52027" />
                <text x="3" y="8" fontSize="6" fontWeight="bold" fill="#fff" fontFamily="DejaVu Sans">PDF</text>
                <circle cx="22.500" cy="23" r="7" fill="url(#ball)" stroke="#2d6ea5" /><path d="M21 22h2.200v4.500M20.500 26.500h4.500" stroke="#123c66" strokeWidth="1.600" fill="none" /><circle cx="22.500" cy="19" r="1.200" fill="#123c66" />
              </svg>
            </button>
            <button type="button" aria-label="Комментарии" className="mt-auto mr-[5px]">
              <svg width="24" height="20" viewBox="0 0 24 20"><path d="M2 1h11q1.500 0 1.500 1.500v6q0 1.500-1.500 1.500H7l-4 4 .5-4H2Q.500 10 .500 8.500v-6Q.500 1 2 1z" fill="url(#gold)" stroke="#a97a10" strokeWidth="0.800" /><path d="M11 5h11q1.500 0 1.500 1.500v6q0 1.500-1.500 1.500h-5l-3.500 5v-5H11q-1.500 0-1.500-1.500v-6Q9.500 5 11 5z" fill="url(#gold)" stroke="#a97a10" strokeWidth="0.800" /><path d="M3 4h8M12.500 8h8M12.500 10.500h8" stroke="#9c6e0c" /></svg>
            </button>
            <button type="button" aria-label="Вложения" className="mt-[21px] mr-[5px] mb-[12px]">
              <svg width="22" height="24" viewBox="0 0 22 24" fill="none" stroke="#c4c4c4" strokeWidth="1.700" strokeLinecap="round"><path d="M20 11.500l-8.500 9q-3.500 3.500-7.500 1.500t-2.500-7L12 3.500q2.500-2.500 5.500-1.500t1.500 5L9.500 17.500q-1.500 1.500-3 .3t-.2-2.800L14 6.500" /></svg>
            </button>
          </div>

          {/* pages panel */}
          <section className="mt-[3px] mb-[2px] flex w-[50%] max-w-[808px] shrink-0 flex-col border-t border-r-2 border-l border-t-[#5e5e5e] border-r-[#555] border-l-[#5e5e5e] bg-[#242424] pb-[3px]">
            <div className="flex h-[43px] shrink-0 items-center justify-between border-b border-black bg-linear-to-b from-[#4a4a4a] to-[#252525] to-55% pr-[3px] pl-[5px]">
              <h2 className="text-[12px] font-bold text-white">Страницы</h2>
              <button type="button" aria-label="Свернуть панель" className="flex size-[13px] items-center justify-center border border-[#8a8a8a] bg-[#333]">
                <svg width="4" height="6" viewBox="0 0 4 6"><path d="M4 0v6L0 3z" fill="#fff" /></svg>
              </button>
            </div>
            <div className="flex h-[30px] shrink-0 items-center border-t border-[#606060] bg-linear-to-b from-[#2e2e2e] to-[#262626] pl-[5px] text-white">
              <svg width="20" height="18" viewBox="0 0 20 18" fill="none">
                <circle cx="7.500" cy="7" r="5" stroke="#a6a6a6" strokeWidth="3" strokeDasharray="2.200 1.700" /><circle cx="7.500" cy="7" r="3.500" fill="#2a2a2a" stroke="#b4b4b4" strokeWidth="3" />
                <circle cx="13" cy="11.500" r="5" stroke="#8e8e8e" strokeWidth="3" strokeDasharray="2.200 1.700" /><circle cx="13" cy="11.500" r="3.500" fill="#2a2a2a" stroke="#a2a2a2" strokeWidth="3" />
              </svg>
              <Caret label="Параметры" className="ml-[1px]" />
            </div>
            <div className="mr-[1px] ml-[3px] flex min-h-0 flex-1 border-t border-white bg-[#f5f5f5]">
              <div className="grid min-w-0 flex-1 auto-rows-[102px] grid-cols-[repeat(auto-fill,102px)] overflow-hidden pt-[5px] pl-[5px]">
                {thumbs.map((n) => <Thumb key={n} n={n} labelled={n < 50} />)}
              </div>
              <div className={`${track} w-[13px]`}>
                <ScrollBtn label="Вверх" />
                <div className="h-[33px] border border-t-white border-l-white border-r-2 border-b-2 border-r-[#202020] border-b-[#202020] bg-[#c4c4c4]" />
                <span className="flex-1" />
                <ScrollBtn label="Вниз" down />
              </div>
            </div>
          </section>

          {/* splitter */}
          <div className="flex w-[5px] shrink-0 items-center bg-[#3a3a3a]">
            <span className="h-12 w-[4px] bg-[#2c2c2c] bg-[radial-gradient(circle,#888_35%,transparent_45%)] bg-[length:2px_2px]" />
          </div>

          {/* document */}
          <main className="flex min-w-0 flex-1 justify-center overflow-hidden">
            <DocPage />
          </main>
          <div className={`${track} w-[14px]`}>
            <ScrollBtn label="Прокрутить вверх" />
            <div className="mt-[9px] h-[6px] border border-t-white border-l-white border-r-2 border-b-2 border-r-[#202020] border-b-[#202020] bg-[#c4c4c4]" />
            <span className="flex-1" />
          </div>
        </div>
        <div className="h-[2px] shrink-0 border-t border-[#a8a8a8] bg-[#f0f0f0]" />

        <span role="tooltip" className="absolute top-[78px] left-0 z-20 border border-black bg-white px-[2px] text-[13px] leading-[19px] text-[#8c108c]">Файл</span>
      </div>
    </div>
  );
}
